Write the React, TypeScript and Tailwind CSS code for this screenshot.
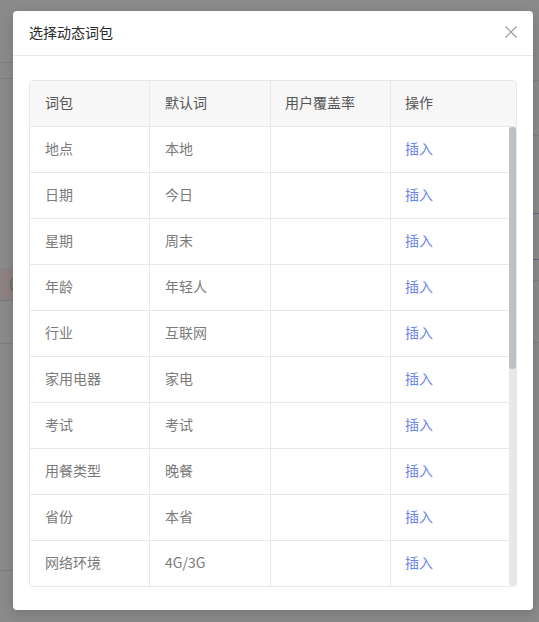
import React from 'react';

const rows = [
    {name: '地点', word: '本地'},
    {name: '日期', word: '今日'},
    {name: '星期', word: '周末'},
    {name: '年龄', word: '年轻人'},
    {name: '行业', word: '互联网'},
    {name: '家用电器', word: '家电'},
    {name: '考试', word: '考试'},
    {name: '用餐类型', word: '晚餐'},
    {name: '省份', word: '本省'},
    {name: '网络环境', word: '4G/3G'},
];

const font = {fontFamily: '"Noto Sans CJK SC", "Noto Sans", sans-serif'};

const App: React.FC = () => {
    return (
        <div className="relative w-[539px] h-[622px] overflow-hidden bg-[#8a8a8a]" style={font}>
            {/* faint page behind the mask */}
            <div className="absolute left-0 top-[62px] w-[13px] h-px bg-[#7d7d7d]"/>
            <div className="absolute left-0 top-[78px] w-[13px] h-px bg-[#7d7d7d]"/>
            <div className="absolute left-0 top-[268px] w-[13px] h-[33px] bg-[#8d8181] border-b border-[#7a7a7a]"/>
            <div className="absolute left-[9px] top-[276px] text-[13px] leading-4 text-[#5a5a5a]">(</div>
            <div className="absolute left-0 top-[343px] w-[13px] h-px bg-[#7d7d7d]"/>
            <div className="absolute left-0 top-[570px] w-[13px] h-px bg-[#7d7d7d]"/>
            <div className="absolute right-0 top-[80px] w-[6px] h-px bg-[#7d7d7d]"/>
            <div className="absolute right-0 top-[135px] w-[6px] h-px bg-[#7d7d7d]"/>
            <div className="absolute right-0 top-[213px] w-[6px] h-px bg-[#5c6a8c]"/>
            <div className="absolute right-0 top-[259px] w-[6px] h-px bg-[#5c6a8c]"/>
            <div className="absolute right-0 top-[280px] w-[6px] h-px bg-[#7d7d7d]"/>
            <div className="absolute right-0 top-[342px] w-[6px] h-px bg-[#7d7d7d]"/>

            <div className="relative pl-[13px] pt-[11px]">
                <div className="w-[520px] h-[599px] bg-white rounded flex flex-col shadow-[0_4px_12px_rgba(0,0,0,0.15)]">
                    <div className="h-[45px] flex items-center justify-between pl-4 pr-[15px] pb-[2px] border-b border-[#e8e8e8]">
                        <span className="text-[14px] text-[#2a2a2a]">选择动态词包</span>
                        <svg width="14" height="14" viewBox="0 0 14 14" className="text-[#999]">
                            <path d="M1.5 1.5 L12.5 12.5 M12.5 1.5 L1.5 12.5" stroke="currentColor" strokeWidth="1.2" fill="none"/>
                        </svg>
                    </div>
                    <div className="px-4 pt-6 pb-6 flex-1 min-h-0">
                        <div className="h-[507px] border border-[#e8e8e8] rounded-sm flex flex-col text-sm">
                            <div className="flex h-[46px] shrink-0 bg-[#f7f7f7] border-b border-[#e8e8e8] text-[#555]">
                                <div className="w-[120px] pl-[15px] pb-[4px] flex items-center border-r border-[#e8e8e8]">词包</div>
                                <div className="w-[121px] pl-[15px] pb-[4px] flex items-center border-r border-[#e8e8e8]">默认词</div>
                                <div className="w-[120px] pl-[14px] pb-[4px] flex items-center border-r border-[#e8e8e8]">用户覆盖率</div>
                                <div className="flex-1 pl-[14px] pb-[4px] flex items-center">操作</div>
                            </div>
                            <div className="flex flex-1 min-h-0">
                                <div className="flex-1 overflow-hidden">
                                    {rows.map((r) => (
                                        <div key={r.name} className="flex h-[46px] border-b border-[#e8e8e8] text-[#7a7a7a]">
                                            <div className="w-[120px] pl-[15px] pb-[4px] flex items-center border-r border-[#e8e8e8]">{r.name}</div>
                                            <div className="w-[121px] pl-[15px] pb-[4px] flex items-center border-r border-[#e8e8e8]">{r.word}</div>
                                            <div className="w-[120px] border-r border-[#e8e8e8]"/>
                                            <div className="flex-1 pl-[14px] pb-[4px] flex items-center text-[#6b86e8]">插入</div>
                                        </div>
                                    ))}
                                </div>
                                <div className="w-[7px] shrink-0 bg-[#e6e8eb] rounded-b-sm">
                                    <div className="h-[242px] bg-[#bcc1c6] rounded-sm"/>
                                </div>
                            </div>
                        </div>
                    </div>
                </div>
            </div>
        </div>
    );
};

export default App;
